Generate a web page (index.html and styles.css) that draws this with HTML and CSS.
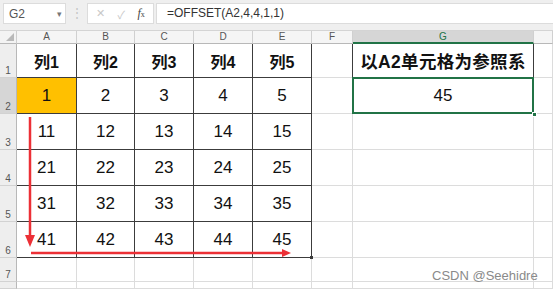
FILE: index.html
```html
<!DOCTYPE html>
<html lang="zh-CN">
<head>
    <meta charset="utf-8">
    <title>OFFSET</title>
    <link rel="stylesheet" href="styles.css">
</head>
<body>
    <div class="formula-bar">
        <div class="name-box"><span>G2</span><span class="caret">&#9662;</span></div>
        <div class="grip">&#8942;</div>
        <div class="fx-tools">
            <span class="tool">&#10005;</span>
            <span class="tool">&#10003;</span>
            <span class="fx"><i>f</i><small>x</small></span>
        </div>
        <div class="formula">=OFFSET(A2,4,4,1,1)</div>
    </div>

    <div class="sheet">
        <!-- column headers -->
        <div class="corner"><svg width="8" height="8" viewBox="0 0 8 8"><polygon points="8,0 8,8 0,8" fill="#b9b9b9"/></svg></div>
        <div class="ch">A</div>
        <div class="ch">B</div>
        <div class="ch">C</div>
        <div class="ch">D</div>
        <div class="ch">E</div>
        <div class="ch">F</div>
        <div class="ch active">G</div>
        <div class="ch"></div>

        <!-- row 1 -->
        <div class="rh">1</div>
        <div class="c t head">列1</div>
        <div class="c t head">列2</div>
        <div class="c t head">列3</div>
        <div class="c t head">列4</div>
        <div class="c t head">列5</div>
        <div class="c edge"></div>
        <div class="c t head wide">以A2单元格为参照系</div>
        <div class="c"></div>

        <!-- row 2 -->
        <div class="rh active">2</div>
        <div class="c t origin">1</div>
        <div class="c t">2</div>
        <div class="c t">3</div>
        <div class="c t">4</div>
        <div class="c t">5</div>
        <div class="c edge"></div>
        <div class="c t selected">45<span class="handle"></span></div>
        <div class="c"></div>

        <!-- row 3 -->
        <div class="rh">3</div>
        <div class="c t">11</div>
        <div class="c t">12</div>
        <div class="c t">13</div>
        <div class="c t">14</div>
        <div class="c t">15</div>
        <div class="c"></div>
        <div class="c"></div>
        <div class="c"></div>

        <!-- row 4 -->
        <div class="rh">4</div>
        <div class="c t">21</div>
        <div class="c t">22</div>
        <div class="c t">23</div>
        <div class="c t">24</div>
        <div class="c t">25</div>
        <div class="c"></div>
        <div class="c"></div>
        <div class="c"></div>

        <!-- row 5 -->
        <div class="rh">5</div>
        <div class="c t">31</div>
        <div class="c t">32</div>
        <div class="c t">33</div>
        <div class="c t">34</div>
        <div class="c t">35</div>
        <div class="c"></div>
        <div class="c"></div>
        <div class="c"></div>

        <!-- row 6 -->
        <div class="rh">6</div>
        <div class="c t">41</div>
        <div class="c t">42</div>
        <div class="c t">43</div>
        <div class="c t">44</div>
        <div class="c t last">45</div>
        <div class="c"></div>
        <div class="c"></div>
        <div class="c"></div>

        <!-- row 7 -->
        <div class="rh">7</div>
        <div class="c"></div>
        <div class="c"></div>
        <div class="c"></div>
        <div class="c"></div>
        <div class="c"></div>
        <div class="c"></div>
        <div class="c"></div>
        <div class="c"></div>

        <!-- row 8, cut off by the window -->
        <div class="rh"></div>
        <div class="c"></div>
        <div class="c"></div>
        <div class="c"></div>
        <div class="c"></div>
        <div class="c"></div>
        <div class="c"></div>
        <div class="c"></div>
        <div class="c"></div>

        <!-- offset path: 4 rows down, 4 columns right -->
        <svg class="arrows" width="553" height="258" viewBox="0 0 553 258">
            <line x1="30" y1="86" x2="30" y2="206" stroke="#ec3036" stroke-width="2.5"/>
            <polygon points="25,204 35,204 30,216" fill="#ec3036"/>
            <line x1="31" y1="222" x2="284" y2="222" stroke="#ec3036" stroke-width="2.5"/>
            <polygon points="282,218 282,226 291,222" fill="#ec3036"/>
        </svg>
    </div>

    <div class="watermark">CSDN @Seehidre</div>
</body>
</html>
```

FILE: styles.css
```css
* {
    box-sizing: border-box;
}

body {
    margin: 0;
    width: 553px;
    height: 289px;
    overflow: hidden;
    position: relative;
    background-color: #ffffff;
    font-family: "Liberation Sans", "Noto Sans CJK SC", sans-serif;
}

/* formula bar */
.formula-bar {
    display: flex;
    align-items: flex-start;
    height: 31px;
    padding: 3px 0 0 3px;
    background-color: #efefef;
    border-bottom: 1px solid #d4d4d4;
}

.name-box {
    display: flex;
    align-items: center;
    justify-content: space-between;
    width: 63px;
    height: 21px;
    padding: 0 3px 0 5px;
    background-color: #ffffff;
    border: 1px solid #dcdcdc;
    font-size: 12px;
    color: #555555;
}

.caret {
    font-size: 9px;
    color: #777777;
}

.grip {
    width: 21px;
    height: 21px;
    line-height: 21px;
    text-align: center;
    font-size: 12px;
    color: #c4c4c4;
}

.fx-tools {
    display: flex;
    align-items: center;
    justify-content: space-around;
    width: 67px;
    height: 21px;
    padding: 0 2px;
    background-color: #ffffff;
    border: 1px solid #dcdcdc;
}

.tool {
    font-size: 11px;
    color: #c8c8c8;
}

.fx {
    font-family: "Liberation Serif", serif;
    font-size: 12px;
    color: #444444;
}

.fx small {
    font-size: 8px;
}

.formula {
    flex: 1;
    height: 21px;
    line-height: 19px;
    margin-left: 2px;
    padding-left: 10px;
    background-color: #ffffff;
    border: 1px solid #dcdcdc;
    border-right: none;
    font-size: 12px;
    color: #333333;
}

/* grid of cells */
.sheet {
    position: relative;
    display: grid;
    grid-template-columns: 17px 60px 58px 59px 59px 59px 41px 181px 1fr;
    grid-template-rows: 13px 34px 36px 36px 36px 36px 36px 24px 7px;
}

.corner {
    display: flex;
    align-items: flex-end;
    justify-content: flex-end;
    padding: 0 2px 2px 0;
    background-color: #f3f3f3;
    border-right: 1px solid #cfcfcf;
    border-bottom: 1px solid #b8b8b8;
}

.ch {
    background-color: #f5f5f5;
    border-right: 1px solid #d0d0d0;
    border-bottom: 1px solid #b8b8b8;
    font-size: 10px;
    line-height: 12px;
    text-align: center;
    color: #555555;
}

.ch.active {
    background-color: #d6d6d6;
    border-bottom: 2px solid #217346;
    color: #217346;
}

.rh {
    display: flex;
    align-items: flex-end;
    justify-content: center;
    padding-bottom: 1px;
    background-color: #eeeeee;
    border-right: 1px solid #b8b8b8;
    border-bottom: 1px solid #d2d2d2;
    font-size: 10px;
    color: #555555;
}

.rh.active {
    background-color: #d6d6d6;
}

.c {
    display: flex;
    align-items: center;
    justify-content: center;
    border-right: 1px solid #dcdcdc;
    border-bottom: 1px solid #dcdcdc;
    font-size: 17px;
    color: #111111;
}

.c.t {
    border-right-color: #3c3c3c;
    border-bottom-color: #3c3c3c;
}

.c.edge {
    border-right-color: #3c3c3c;
}

.head {
    font-size: 16px;
    font-weight: bold;
}

.head.wide {
    font-size: 17.5px;
    letter-spacing: 0.3px;
}

.origin {
    background-color: #ffc000;
}

.selected {
    position: relative;
}

.selected::after {
    content: "";
    position: absolute;
    top: -1px;
    left: -1px;
    right: -1px;
    bottom: -1px;
    border: 2px solid #217346;
}

.handle {
    position: absolute;
    right: -4px;
    bottom: -4px;
    width: 5px;
    height: 5px;
    background-color: #217346;
    border: 1px solid #ffffff;
    z-index: 1;
}

/* small corner mark at the end of the table */
.last {
    position: relative;
}

.last::after {
    content: "";
    position: absolute;
    right: -2px;
    bottom: -2px;
    width: 3px;
    height: 3px;
    background-color: #3c3c3c;
}

.arrows {
    position: absolute;
    left: 0;
    top: 0;
    pointer-events: none;
}

.watermark {
    position: absolute;
    left: 432px;
    top: 268px;
    font-size: 13px;
    color: #8a8a8a;
}
```
